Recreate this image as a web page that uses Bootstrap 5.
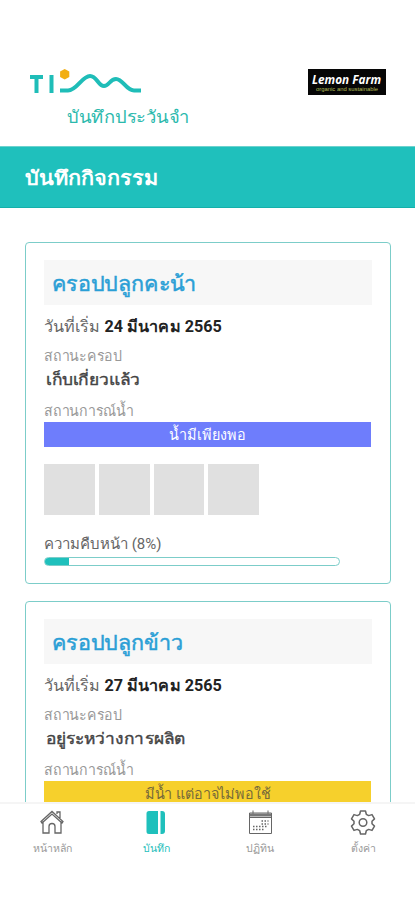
<!DOCTYPE html>
<html lang="th">
<head>
<meta charset="utf-8">
<meta name="viewport" content="width=device-width, initial-scale=1">
<title>บันทึกกิจกรรม</title>
<link href="https://cdn.jsdelivr.net/npm/bootstrap@5.3.0/dist/css/bootstrap.min.css" rel="stylesheet">
<style>
:root{--teal:#1fc0bc}
body{font-family:Roboto,"Noto Sans",sans-serif;color:#555;background:#fff}
.top-head{height:146px;padding:67px 29px 0 30px}
.tagline{font-size:17.5px;line-height:28px;color:#2bb9ad;padding-left:37px;margin-top:8px}
.brand-box{width:78px;height:26px;margin-top:2px}
.banner{height:62px;background:var(--teal);border-top:1px solid #6dd2ce;border-bottom:1px solid #14b0aa;color:#fff;padding:2px 0 0 25px;font-size:20px;font-weight:700}
.feed{padding:34px 24px 0 25px}
.crop{border:1.5px solid #7ccdc9;border-radius:4px;height:342px;margin-bottom:17px;padding:17px 18px 0 18px;flex-shrink:0}
.crop-title{height:45px;background:#f7f7f7;color:#2a9fd6;font-size:21px;font-weight:500;padding:4px 0 0 8px;-webkit-text-stroke:.5px #2a9fd6}
.line-date{height:30px;margin-top:7px;font-size:16px;color:#666}
.line-date b{color:#222;font-weight:700}
.line-label{height:24px;margin-top:3px;font-size:14.5px;color:#999}
.line-value{height:24px;padding-left:2px;font-size:15.5px;font-weight:500;color:#444;-webkit-text-stroke:.4px #444}
.line-label.second{margin-top:9px;height:20px}
.water{height:25px;margin-right:1px;padding-top:2px;font-size:14.5px}
.water.enough{background:#6e7dfc;color:#fff}
.water.risk{background:#f6d02c;color:#776a3a}
.thumbs{gap:4px;margin-top:17px}
.thumbs span{width:50.8px;height:51px;background:#e0e0e0}
.line-prog{height:24px;margin-top:17px;font-size:15px;color:#666}
.meter{width:296px;height:9px;border:1px solid #7ccdc9;border-radius:5px;background:#fff;margin-top:1px}
.meter .progress-bar{background:var(--teal)}
.tabs{height:98px;border-top:2px solid #f5f5f5;background:#fff}
.tabs a{width:103.7px;padding:5px 0 0 1px;font-size:10.5px;line-height:16px;color:#999;text-decoration:none}
.tabs a.on{color:var(--teal)}
.tabs svg{margin-bottom:6px}
/* Thai lettering widths */
.fit{display:inline-block;white-space:nowrap;transform-origin:left center}
.tagline .fit{transform:scaleX(1.05)}
.banner .fit{transform:scaleX(1.08)}
.crop-title .fit{transform:scaleX(1.025)}
.line-date .fit{transform:scaleX(1.01)}
.line-label .fit{transform:scaleX(.975)}
.line-value .fit{transform:scaleX(1.12)}
.water .fit{transform:scaleX(.99);transform-origin:center}
</style>
<script src="https://cdn.jsdelivr.net/npm/bootstrap@5.3.0/dist/js/bootstrap.bundle.min.js"></script>
</head>
<body>
<div class="d-flex flex-column vh-100 overflow-hidden">
<header class="top-head d-flex justify-content-between align-items-start flex-shrink-0">
<div>
<svg class="d-block" width="112" height="28" viewBox="0 0 112 28"><path d="M0 10h13M6.500 10v16M21.500 8v18" fill="none" stroke="#1fbdb8" stroke-width="4"/><path d="M30 23.500h8C47 23.500 52 9 60 9c7 0 8 10 14 10 5 0 6-7 12-7 7 0 10 11.500 18 11.500h7" fill="none" stroke="#1fbdb8" stroke-width="4"/><path d="M34.700 2l4.600 2.500v5.500l-4.600 2.500-4.600-2.500V4.500z" fill="#f2ae12"/></svg>
<div class="tagline"><span class="fit">บันทึกประวันจำ</span></div>
</div>
<svg class="brand-box" viewBox="0 0 78 26"><path d="M0 0h78v26H0z" fill="#060606"/><text x="4" y="14.500" font-family="Open Sans" font-size="13" font-weight="700" font-style="italic" fill="#fff" textLength="69" lengthAdjust="spacingAndGlyphs">Lemon Farm</text><text x="8" y="22" font-family="Liberation Sans" font-size="5.500" fill="#b4bf58" textLength="62" lengthAdjust="spacingAndGlyphs">organic and sustainable</text></svg>
</header>
<div class="banner d-flex align-items-center flex-shrink-0"><span class="fit">บันทึกกิจกรรม</span></div>
<main class="feed d-flex flex-column flex-grow-1 overflow-hidden">
<section class="crop">
<div class="crop-title d-flex align-items-center"><span class="fit">ครอปปลูกคะน้า</span></div>
<div class="line-date d-flex align-items-center"><span class="fit">วันที่เริ่ม <b>24 มีนาคม 2565</b></span></div>
<div class="line-label d-flex align-items-center"><span class="fit">สถานะครอป</span></div>
<div class="line-value d-flex align-items-center"><span class="fit">เก็บเกี่ยวแล้ว</span></div>
<div class="line-label second d-flex align-items-center"><span class="fit">สถานการณ์น้ำ</span></div>
<div class="water enough d-flex align-items-center justify-content-center"><span class="fit">น้ำมีเพียงพอ</span></div>
<div class="thumbs d-flex"><span></span><span></span><span></span><span></span></div>
<div class="line-prog d-flex align-items-center"><span class="fit">ความคืบหน้า (8%)</span></div>
<div class="meter progress"><div class="progress-bar" style="width:8%"></div></div>
</section>
<section class="crop">
<div class="crop-title d-flex align-items-center"><span class="fit">ครอปปลูกข้าว</span></div>
<div class="line-date d-flex align-items-center"><span class="fit">วันที่เริ่ม <b>27 มีนาคม 2565</b></span></div>
<div class="line-label d-flex align-items-center"><span class="fit">สถานะครอป</span></div>
<div class="line-value d-flex align-items-center"><span class="fit">อยู่ระหว่างการผลิต</span></div>
<div class="line-label second d-flex align-items-center"><span class="fit">สถานการณ์น้ำ</span></div>
<div class="water risk d-flex align-items-center justify-content-center"><span class="fit">มีน้ำ แต่อาจไม่พอใช้</span></div>
</section>
</main>
<nav class="tabs d-flex flex-shrink-0">
<a href="#" class="d-flex flex-column align-items-center"><svg width="26" height="26" viewBox="0 0 26 26" fill="none" stroke="#666" stroke-width="1.300"><path d="M4 12v12h6v-6.500a3 3 0 0 1 6 0V24h6V12M2 12.500 13 2.500l11 10-1 1.500L13 5 3 14zM18 5V3h3v6"/></svg><span class="fit">หน้าหลัก</span></a>
<a href="#" class="on d-flex flex-column align-items-center"><svg width="26" height="26" viewBox="0 0 26 26" fill="#1fc0bc"><path d="M6 2h9v23H6a2.500 2.500 0 0 1-2.500-2.500v-18A2.500 2.500 0 0 1 6 2zM17.500 2h1.500a3 3 0 0 1 3 3v17a3 3 0 0 1-3 3h-1.500z"/></svg><span class="fit">บันทึก</span></a>
<a href="#" class="d-flex flex-column align-items-center"><svg width="26" height="26" viewBox="0 0 26 26" fill="none" stroke="#666"><path d="M2.500 4h22v20.500h-22zM2.500 8.500h22M6 1.500V5M21 1.500V5"/><path d="M3 6h21" stroke="#777" stroke-width="3"/><path d="M14.500 12h7M14.500 15h7M6 17.500h14M6 20.500h11" stroke-width="1.500" stroke-dasharray="1.500 1.500"/></svg><span class="fit">ปฏิทิน</span></a>
<a href="#" class="d-flex flex-column align-items-center"><svg width="26" height="26" viewBox="0 0 26 26" fill="none" stroke="#666" stroke-width="1.500" stroke-linejoin="round"><path d="M10.500 2h5l.8 3.300 2.400 1.300 3.300-1 2.500 4.300-2.500 2.400v2.400l2.500 2.400-2.500 4.300-3.300-1-2.400 1.300-.8 3.300h-5l-.8-3.300-2.400-1.300-3.300 1-2.500-4.300L4 14.700v-2.400L1.500 9.900 4 5.600l3.300 1 2.400-1.300z"/><circle cx="13" cy="13.500" r="3.800"/></svg><span class="fit">ตั้งค่า</span></a>
</nav>
</div>
</body>
</html>
